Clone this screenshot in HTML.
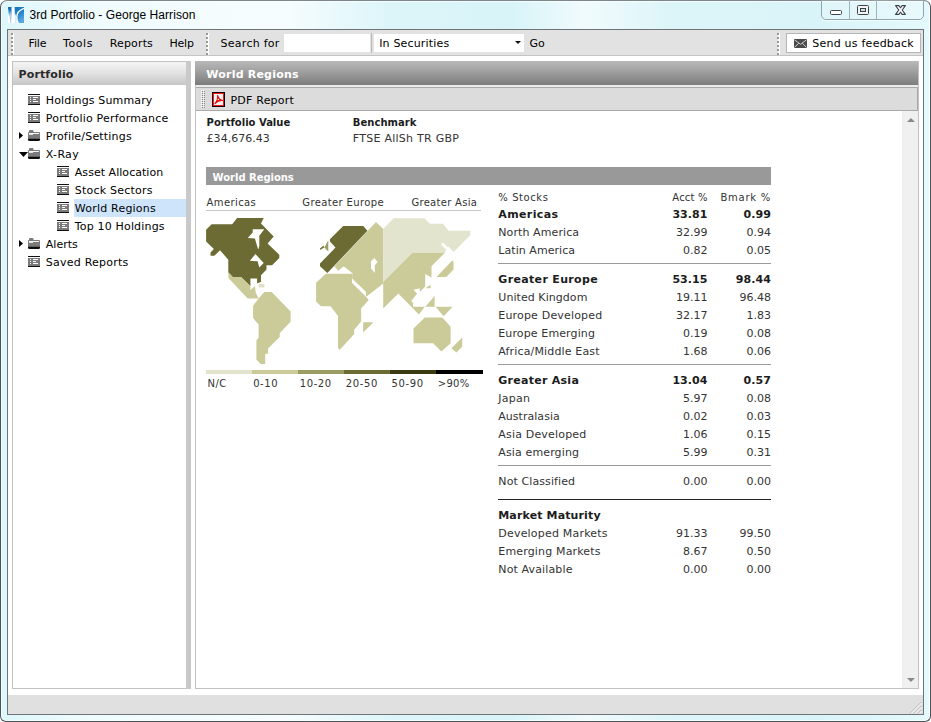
<!DOCTYPE html>
<html><head><meta charset="utf-8">
<style>
html,body{margin:0;padding:0;}
body{width:931px;height:722px;position:relative;overflow:hidden;background:#fff;font-family:"DejaVu Sans","Liberation Sans",sans-serif;font-size:11px;color:#000;}
.a{position:absolute;white-space:nowrap;}
.t{position:absolute;white-space:nowrap;line-height:14px;height:14px;font-size:11px;letter-spacing:-0.25px;}
.b{font-weight:bold;letter-spacing:-0.55px;}
#win{left:0;top:0;width:929px;height:720px;border:1px solid #4a545b;border-top-color:#7c878d;box-shadow:inset 0 0 0 1px rgba(255,255,255,.75);border-radius:7px 7px 6px 6px;background:linear-gradient(90deg,#dcf7fb 0%,#eefbfd 8%,#f7fdfe 30%,#dcf5f9 42%,#d8f4f8 55%,#f1fbfd 63%,#dcf5f9 72%,#d9f4f8 88%,#e4f9fc 100%);}
#client{left:7px;top:29px;width:915px;height:684px;border:1px solid #6e7378;background:#fff;}
#toolbar{left:8px;top:30px;width:915px;height:25px;background:#e2e2e2;border-bottom:1px solid #c4c4c4;}
.grip{width:3px;background:linear-gradient(#fff,#fff) 1px 0/2px 100% no-repeat;}
.grip i{position:absolute;left:0;width:2px;height:2px;background:#989898;}
#status{left:8px;top:695px;width:915px;height:19px;background:#e0e0e0;}
#lp{left:12px;top:61px;width:173px;height:626px;border:1px solid #c2c2c2;background:#fff;}
#lph{left:13px;top:62px;width:173px;height:23px;background:linear-gradient(180deg,#f4f4f4 0%,#e4e4e4 45%,#c6c6c6 100%);}
#split{left:186px;top:61px;width:5px;height:628px;background:#c9c9c9;}
#rp{left:195px;top:61px;width:722px;height:626px;border:1px solid #c2c2c2;background:#fff;}
#rph{left:195px;top:61px;width:723px;height:24px;background:linear-gradient(180deg,#b9b9b9 0%,#a2a2a2 40%,#7c7c7c 100%);}
#sub{left:196px;top:87px;width:721px;height:22px;background:#dcdcdc;border:1px solid #a9a9a9;border-left:none;}
#sb{left:902px;top:111px;width:16px;height:577px;background:#f0f0f0;}
.ln{position:absolute;left:498px;width:273px;height:1px;background:#8f8f8f;}
.n1{position:absolute;right:223px;white-space:nowrap;line-height:14px;font-size:11px;letter-spacing:-0.25px;}
.n2{position:absolute;right:160px;white-space:nowrap;line-height:14px;font-size:11px;letter-spacing:-0.25px;}
</style></head><body>
<div class="a" id="win"></div>
<div class="a" id="client"></div>
<div class="a" id="toolbar"></div>
<div class="a" id="status"></div>
<svg class="a" style="left:909px;top:701px" width="13" height="13" viewBox="0 0 13 13"><path d="M12.5 1L1 12.5M12.5 5L5 12.5M12.5 9L9 12.5" stroke="#a8a8a8" stroke-width="1"/><path d="M12.5 2L2 12.5M12.5 6L6 12.5M12.5 10L10 12.5" stroke="#fff" stroke-width="1"/></svg>
<!-- title -->
<svg class="a" style="left:8px;top:7px" width="16" height="16" viewBox="0 0 16 16"><defs><linearGradient id="lg" x1="0" y1="0" x2="0.6" y2="1"><stop offset="0" stop-color="#0f6fb4"/><stop offset="0.6" stop-color="#2582c8"/><stop offset="1" stop-color="#5aa7e0"/></linearGradient></defs><rect width="16" height="16" fill="url(#lg)"/><path d="M0 16V9L0.8 1.5 1.6 8 2.6 16Z" fill="#fff"/><path d="M3.6 0H6.6L7.2 16H3.1Z" fill="#fff"/><path d="M2 3L3.4 10V16H2.6Z" fill="#fff" opacity="0.9"/><path d="M16 1.3C11.5 3 8.6 6.5 8.8 10.5 8.9 13 9.6 15 10.5 16" fill="none" stroke="#fff" stroke-width="1.3"/><path d="M7.2 16L6.9 6 8.4 9.5C8.5 12 9 14.5 9.8 16Z" fill="#fff" opacity="0.85"/></svg>
<!-- window buttons -->
<div class="a" style="left:821px;top:-1px;width:101px;height:19px;border:1px solid #8fa6b0;border-radius:0 0 5px 5px;background:rgba(255,255,255,0.18);box-shadow:0 1px 0 rgba(255,255,255,.7)"></div>
<div class="a" style="left:849px;top:0px;width:1px;height:19px;background:#9fb3bc"></div>
<div class="a" style="left:876px;top:0px;width:1px;height:19px;background:#9fb3bc"></div>
<div class="a" style="left:830px;top:10px;width:10px;height:3px;border:1px solid #3c424c;border-radius:1.5px;background:#fff"></div>
<div class="a" style="left:857px;top:5px;width:10px;height:8px;border:1px solid #3c424c;border-radius:1.5px;background:#f4f4f6"></div>
<div class="a" style="left:860px;top:8px;width:4px;height:2px;border:1px solid #3c424c;background:#cfe0ea"></div>
<svg class="a" style="left:894px;top:4px" width="13" height="12" viewBox="0 0 13 12"><path d="M1.6 1.6H4.9L6.5 3.8 8.1 1.6H11.4L8.2 6 11.4 10.4H8.1L6.5 8.2 4.9 10.4H1.6L4.8 6Z" fill="#fafafa" stroke="#3c424c" stroke-width="1.1" stroke-linejoin="round"/></svg>
<!-- toolbar -->
<div class="a grip" style="left:11px;top:33px;height:22px"><i style="top:0px"></i><i style="top:4px"></i><i style="top:8px"></i><i style="top:12px"></i><i style="top:16px"></i><i style="top:20px"></i></div>
<div class="a grip" style="left:206px;top:33px;height:22px"><i style="top:0px"></i><i style="top:4px"></i><i style="top:8px"></i><i style="top:12px"></i><i style="top:16px"></i><i style="top:20px"></i></div>
<div class="a grip" style="left:777px;top:33px;height:22px"><i style="top:0px"></i><i style="top:4px"></i><i style="top:8px"></i><i style="top:12px"></i><i style="top:16px"></i><i style="top:20px"></i></div>
<div class="a" style="left:284px;top:34px;width:86px;height:18px;background:#fff"></div>
<div class="a" style="left:371px;top:33px;width:1px;height:20px;background:#b9b9b9"></div>
<div class="a" style="left:374px;top:34px;width:150px;height:18px;background:#fff"></div>
<div class="a" style="left:515px;top:41px;width:0;height:0;border-left:3px solid transparent;border-right:3px solid transparent;border-top:3px solid #111"></div>
<div class="a" style="left:786px;top:33px;width:133px;height:18px;background:#fff;border:1px solid #b5b5b5"></div>
<svg class="a" style="left:794px;top:39px" width="13" height="9" viewBox="0 0 13 9"><rect width="13" height="9" fill="#4a4a4a"/><path d="M0.5 0.8L6.5 5.3 12.5 0.8M0.5 8.5L4.7 4.2M12.5 8.5L8.3 4.2" stroke="#dcdcdc" stroke-width="0.9" fill="none"/></svg>
<!-- left panel -->
<div class="a" id="lp"></div>
<div class="a" id="lph"></div>
<div class="a" id="split"></div>
<div class="a" style="left:74px;top:199px;width:112px;height:18px;background:#cde4fb"></div>
<svg class="a" style="left:28px;top:94px" width="12" height="11" viewBox="0 0 12 11"><rect x="0" y="0" width="12" height="1" fill="#111"/><rect x="0" y="2" width="12" height="8" fill="#7b7b7b"/><rect x="0" y="10" width="12" height="1" fill="#111"/><rect x="2" y="3" width="1" height="1" fill="#fff"/><rect x="5" y="3" width="5" height="1" fill="#fff"/><rect x="2" y="5" width="1" height="1" fill="#fff"/><rect x="5" y="5" width="3" height="1" fill="#fff"/><rect x="2" y="7" width="1" height="1" fill="#fff"/><rect x="5" y="7" width="5" height="1" fill="#fff"/></svg>
<svg class="a" style="left:28px;top:112px" width="12" height="11" viewBox="0 0 12 11"><rect x="0" y="0" width="12" height="1" fill="#111"/><rect x="0" y="2" width="12" height="8" fill="#7b7b7b"/><rect x="0" y="10" width="12" height="1" fill="#111"/><rect x="2" y="3" width="1" height="1" fill="#fff"/><rect x="5" y="3" width="5" height="1" fill="#fff"/><rect x="2" y="5" width="1" height="1" fill="#fff"/><rect x="5" y="5" width="3" height="1" fill="#fff"/><rect x="2" y="7" width="1" height="1" fill="#fff"/><rect x="5" y="7" width="5" height="1" fill="#fff"/></svg>
<svg class="a" style="left:28px;top:256px" width="12" height="11" viewBox="0 0 12 11"><rect x="0" y="0" width="12" height="1" fill="#111"/><rect x="0" y="2" width="12" height="8" fill="#7b7b7b"/><rect x="0" y="10" width="12" height="1" fill="#111"/><rect x="2" y="3" width="1" height="1" fill="#fff"/><rect x="5" y="3" width="5" height="1" fill="#fff"/><rect x="2" y="5" width="1" height="1" fill="#fff"/><rect x="5" y="5" width="3" height="1" fill="#fff"/><rect x="2" y="7" width="1" height="1" fill="#fff"/><rect x="5" y="7" width="5" height="1" fill="#fff"/></svg>
<svg class="a" style="left:57px;top:166px" width="12" height="11" viewBox="0 0 12 11"><rect x="0" y="0" width="12" height="1" fill="#111"/><rect x="0" y="2" width="12" height="8" fill="#7b7b7b"/><rect x="0" y="10" width="12" height="1" fill="#111"/><rect x="2" y="3" width="1" height="1" fill="#fff"/><rect x="5" y="3" width="5" height="1" fill="#fff"/><rect x="2" y="5" width="1" height="1" fill="#fff"/><rect x="5" y="5" width="3" height="1" fill="#fff"/><rect x="2" y="7" width="1" height="1" fill="#fff"/><rect x="5" y="7" width="5" height="1" fill="#fff"/></svg>
<svg class="a" style="left:57px;top:184px" width="12" height="11" viewBox="0 0 12 11"><rect x="0" y="0" width="12" height="1" fill="#111"/><rect x="0" y="2" width="12" height="8" fill="#7b7b7b"/><rect x="0" y="10" width="12" height="1" fill="#111"/><rect x="2" y="3" width="1" height="1" fill="#fff"/><rect x="5" y="3" width="5" height="1" fill="#fff"/><rect x="2" y="5" width="1" height="1" fill="#fff"/><rect x="5" y="5" width="3" height="1" fill="#fff"/><rect x="2" y="7" width="1" height="1" fill="#fff"/><rect x="5" y="7" width="5" height="1" fill="#fff"/></svg>
<svg class="a" style="left:57px;top:202px" width="12" height="11" viewBox="0 0 12 11"><rect x="0" y="0" width="12" height="1" fill="#111"/><rect x="0" y="2" width="12" height="8" fill="#7b7b7b"/><rect x="0" y="10" width="12" height="1" fill="#111"/><rect x="2" y="3" width="1" height="1" fill="#fff"/><rect x="5" y="3" width="5" height="1" fill="#fff"/><rect x="2" y="5" width="1" height="1" fill="#fff"/><rect x="5" y="5" width="3" height="1" fill="#fff"/><rect x="2" y="7" width="1" height="1" fill="#fff"/><rect x="5" y="7" width="5" height="1" fill="#fff"/></svg>
<svg class="a" style="left:57px;top:220px" width="12" height="11" viewBox="0 0 12 11"><rect x="0" y="0" width="12" height="1" fill="#111"/><rect x="0" y="2" width="12" height="8" fill="#7b7b7b"/><rect x="0" y="10" width="12" height="1" fill="#111"/><rect x="2" y="3" width="1" height="1" fill="#fff"/><rect x="5" y="3" width="5" height="1" fill="#fff"/><rect x="2" y="5" width="1" height="1" fill="#fff"/><rect x="5" y="5" width="3" height="1" fill="#fff"/><rect x="2" y="7" width="1" height="1" fill="#fff"/><rect x="5" y="7" width="5" height="1" fill="#fff"/></svg>
<svg class="a" style="left:28px;top:130px" width="12" height="11" viewBox="0 0 12 11"><path d="M0 3Q0 2 1 2V1Q1 0 2 0H4.5Q5.5 0 5.5 1V2H11Q12 2 12 3V9H0Z" fill="#7b7b7b"/><rect x="1" y="3" width="10" height="1" fill="#f4f4f4"/><rect x="1" y="4" width="4" height="1" fill="#e0e0e0"/><path d="M0 8.7H12V9.5Q12 11 10.5 11H1.5Q0 11 0 9.5Z" fill="#0c0c0c"/></svg>
<svg class="a" style="left:28px;top:148px" width="12" height="11" viewBox="0 0 12 11"><path d="M0 3Q0 2 1 2V1Q1 0 2 0H4.5Q5.5 0 5.5 1V2H11Q12 2 12 3V9H0Z" fill="#7b7b7b"/><rect x="1" y="3" width="10" height="1" fill="#f4f4f4"/><rect x="1" y="4" width="4" height="1" fill="#e0e0e0"/><path d="M0 8.7H12V9.5Q12 11 10.5 11H1.5Q0 11 0 9.5Z" fill="#0c0c0c"/></svg>
<svg class="a" style="left:28px;top:238px" width="12" height="11" viewBox="0 0 12 11"><path d="M0 3Q0 2 1 2V1Q1 0 2 0H4.5Q5.5 0 5.5 1V2H11Q12 2 12 3V9H0Z" fill="#7b7b7b"/><rect x="1" y="3" width="10" height="1" fill="#f4f4f4"/><rect x="1" y="4" width="4" height="1" fill="#e0e0e0"/><path d="M0 8.7H12V9.5Q12 11 10.5 11H1.5Q0 11 0 9.5Z" fill="#0c0c0c"/></svg>
<svg class="a" style="left:19px;top:132px" width="4" height="7" viewBox="0 0 4 7"><path d="M0 0L4 3.5 0 7Z" fill="#000"/></svg>
<svg class="a" style="left:19px;top:240px" width="4" height="7" viewBox="0 0 4 7"><path d="M0 0L4 3.5 0 7Z" fill="#000"/></svg>
<svg class="a" style="left:19px;top:152px" width="9" height="5" viewBox="0 0 9 5"><path d="M0 0H9L4.5 5Z" fill="#000"/></svg>
<!-- right panel -->
<div class="a" id="rp"></div>
<div class="a" id="rph"></div>
<div class="a" style="left:196px;top:85px;width:722px;height:2px;background:#ececec"></div>
<div class="a" id="sub"></div>
<svg class="a" style="left:201px;top:90px" width="4" height="18" viewBox="0 0 4 18"><defs><pattern id="gp" width="2" height="2" patternUnits="userSpaceOnUse"><rect width="1" height="1" fill="#fff"/><rect x="1" y="1" width="1" height="1" fill="#8a8a8a"/></pattern></defs><rect width="4" height="18" fill="url(#gp)"/></svg>
<div class="a" id="sb"></div>
<div class="a" style="left:907px;top:118px;width:0;height:0;border-left:4px solid transparent;border-right:4px solid transparent;border-bottom:4px solid #8a8a8a"></div>
<div class="a" style="left:907px;top:678px;width:0;height:0;border-left:4px solid transparent;border-right:4px solid transparent;border-top:4px solid #8a8a8a"></div>
<svg class="a" style="left:212px;top:92px" width="13" height="15" viewBox="0 0 13 15"><rect width="13" height="15" fill="#120000"/><rect x="1" y="1" width="11" height="13" fill="#ee1c1c"/><rect x="2" y="2" width="9" height="11" fill="#f1f3f1"/><path d="M3 11.5C5 9.5 6 6.5 5.5 3.5C6.5 6.5 7.5 8 10.5 8.5C8 8.3 5.5 9 3 11.5Z" fill="#f02a1a" stroke="#e81010" stroke-width="1.2" stroke-linejoin="round"/><circle cx="6.3" cy="7.4" r="0.7" fill="#fff"/></svg>
<div class="a" style="left:206px;top:167px;width:565px;height:18px;background:#999"></div>
<svg class="a" style="left:0;top:0" width="931" height="722" viewBox="0 0 931 722"><polygon points="237.1,218.1 263.7,218.1 261.0,223.6 273.7,236.4 267.6,243.6 279.3,254.7 279.3,258.0 272.1,265.2 266.5,265.2 266.5,269.6 261.0,275.2 261.0,281.8 257.1,283.5 257.1,278.5 250.4,278.5 250.4,286.3 241.0,276.9 232.7,276.9 228.3,272.4 228.3,259.7 220.0,250.2 214.4,255.8 210.5,255.8 210.5,252.5 213.9,249.1 206.1,241.4 206.1,229.7 211.6,224.2 232.2,224.2" fill="#6b6b33"/>
<polygon points="252.7,229.2 264.3,229.2 259.3,235.8 259.3,246.0 258.2,249.7 254.9,238.6 247.7,238.1 252.7,232.5" fill="#fff"/>
<polygon points="255.4,254.1 263.7,263.0 259.3,267.4 257.6,261.3 249.9,260.8" fill="#fff"/>
<polygon points="228.4,272.3 232.7,276.9 241.0,276.9 250.4,286.3 250.4,290.0 255.0,286.0 255.7,292.6 258.6,298.4 264.4,291.9 271.7,291.9 290.6,311.5 290.6,321.7 279.7,333.3 279.7,337.0 268.1,348.6 268.1,353.7 265.2,353.7 265.2,363.9 260.8,363.9 256.4,359.5 256.4,340.6 258.6,337.7 258.6,324.6 253.1,318.1 253.1,305.7 258.6,298.4 247.7,298.4 228.4,278.1" fill="#cacb99"/>
<rect x="258.6" y="283.9" width="5.8" height="3.6" fill="#dfe0c6"/>
<polygon points="376.0,222.0 383.2,229.0 383.2,283.5 366.6,296.6 352.1,278.6 352.7,273.5 343.8,266.3 338.3,270.8 334.4,266.3" fill="#cacb99"/>
<polygon points="374.3,258.0 377.6,261.9 374.8,265.2 374.8,273.0 371.0,268.5 371.0,261.3" fill="#fff"/>
<polygon points="343.2,225.9 363.3,225.9 367.4,230.8 327.4,273.0 320.0,266.3 320.0,263.6 335.5,247.5 329.9,241.4 329.9,239.2" fill="#6b6b33"/>
<polygon points="328.3,240.3 328.3,251.4 324.4,247.5" fill="#9b9c62"/>
<polygon points="324.4,247.5 320.0,249.9 320.0,248.5 323.5,245.5" fill="#77773c"/>
<polygon points="325.8,273.8 352.8,273.8 352.1,282.8 365.9,296.5 368.7,300.1 361.1,308.4 361.1,321.5 354.2,329.8 354.2,334.0 339.6,349.9 338.0,347.8 338.0,316.0 330.6,306.3 320.9,306.3 316.1,301.5 316.1,282.8" fill="#cacb99"/>
<polygon points="352.1,278.6 365.9,291.8 365.9,296.5 352.1,282.8" fill="#fff"/>
<polygon points="363.2,322.2 373.5,322.2 363.2,332.6" fill="#cacb99"/>
<polygon points="383.2,228.8 393.7,218.2 424.3,218.2 429.9,223.8 443.0,223.8 448.6,230.7 470.4,230.7 470.4,235.1 453.6,251.9 448.2,246.5 444.8,252.8 412.4,252.8 383.2,281.9" fill="#e3e4cd"/>
<polygon points="441.0,244.4 443.0,242.6 451.5,251.0 449.5,253.0" fill="#fff"/>
<polygon points="383.2,281.9 412.4,252.8 444.8,252.8 431.5,266.3 431.5,277.5 425.2,273.9 425.2,286.5 419.8,291.9 419.8,288.3 413.5,289.7 417.0,293.7 411.2,300.9 413.0,302.7 413.0,306.8 424.7,306.8 418.9,314.4 398.3,293.5 383.2,308.4" fill="#cacb99"/>
<polygon points="430.6,284.7 430.6,288.3 425.6,288.3" fill="#cacb99"/>
<polygon points="452.2,260.4 453.5,261.8 453.5,269.4 446.3,277.1 436.4,277.1" fill="#cacb99"/>
<polygon points="434.6,296.0 434.6,306.8 425.2,306.8" fill="#cacb99"/>
<polygon points="435.5,306.8 452.6,306.8 443.6,316.2" fill="#cacb99"/>
<polygon points="424.8,317.6 442.3,317.6 450.6,326.7 450.6,343.3 441.4,351.6 433.1,343.3 413.5,343.3 413.5,328.4" fill="#cacb99"/>
<polygon points="462.2,337.5 462.2,346.7 456.4,352.5 451.4,348.3" fill="#cacb99"/></svg>
<div class="a" style="left:206px;top:210px;width:275px;height:1px;background:#c8c8c8"></div>
<div class="a" style="left:206px;top:370px;width:46px;height:4px;background:#e3e4cd"></div>
<div class="a" style="left:252px;top:370px;width:46px;height:4px;background:#cacb99"></div>
<div class="a" style="left:298px;top:370px;width:46px;height:4px;background:#9b9c62"></div>
<div class="a" style="left:344px;top:370px;width:46px;height:4px;background:#6b6b33"></div>
<div class="a" style="left:390px;top:370px;width:46px;height:4px;background:#3b3b12"></div>
<div class="a" style="left:436px;top:370px;width:47px;height:4px;background:#000"></div>
<div class="a" style="left:498px;top:263px;width:273px;height:1px;background:#9a9a9a"></div>
<div class="a" style="left:498px;top:364px;width:273px;height:1px;background:#9a9a9a"></div>
<div class="a" style="left:498px;top:465px;width:273px;height:1px;background:#9a9a9a"></div>
<div class="a" style="left:498px;top:499px;width:273px;height:1px;background:#222"></div>
<div class="t" style="left:28.5px;top:36.5px;font-size:11px;letter-spacing:-0.11px;">File</div>
<div class="t" style="left:63.0px;top:36.5px;font-size:11px;letter-spacing:0.60px;">Tools</div>
<div class="t" style="left:109.7px;top:36.5px;font-size:11px;letter-spacing:0.16px;">Reports</div>
<div class="t" style="left:169.5px;top:36.5px;font-size:11px;letter-spacing:-0.24px;">Help</div>
<div class="t" style="left:220.6px;top:36.5px;font-size:11px;letter-spacing:0.26px;">Search for</div>
<div class="t" style="left:379.2px;top:36.5px;font-size:11px;letter-spacing:0.17px;">In Securities</div>
<div class="t" style="left:529.6px;top:36.5px;font-size:11px;letter-spacing:-0.08px;">Go</div>
<div class="t" style="left:812.2px;top:36.5px;font-size:11px;letter-spacing:0.24px;">Send us feedback</div>
<div class="t" style="left:18.5px;top:68.0px;font-size:11px;letter-spacing:0.14px;font-weight:bold;color:#2a2a2a;">Portfolio</div>
<div class="t" style="left:206.3px;top:68.0px;font-size:11px;letter-spacing:0.21px;font-weight:bold;color:#fff;">World Regions</div>
<div class="t" style="left:230.5px;top:93.5px;font-size:11px;letter-spacing:0.21px;">PDF Report</div>
<div class="t" style="left:45.8px;top:94.0px;font-size:11px;letter-spacing:0.14px;">Holdings Summary</div>
<div class="t" style="left:45.8px;top:112.0px;font-size:11px;letter-spacing:0.20px;">Portfolio Performance</div>
<div class="t" style="left:45.8px;top:130.0px;font-size:11px;letter-spacing:0.19px;">Profile/Settings</div>
<div class="t" style="left:45.8px;top:148.0px;font-size:11px;letter-spacing:0.32px;">X-Ray</div>
<div class="t" style="left:74.8px;top:166.0px;font-size:11px;letter-spacing:0.04px;">Asset Allocation</div>
<div class="t" style="left:74.8px;top:184.0px;font-size:11px;letter-spacing:0.22px;">Stock Sectors</div>
<div class="t" style="left:74.8px;top:202.0px;font-size:11px;letter-spacing:0.21px;">World Regions</div>
<div class="t" style="left:74.8px;top:220.0px;font-size:11px;letter-spacing:0.17px;">Top 10 Holdings</div>
<div class="t" style="left:45.8px;top:238.0px;font-size:11px;letter-spacing:-0.00px;">Alerts</div>
<div class="t" style="left:45.8px;top:256.0px;font-size:11px;letter-spacing:0.23px;">Saved Reports</div>
<div class="t" style="left:206.6px;top:116.0px;font-size:10px;letter-spacing:-0.00px;font-weight:bold;color:#1c1c1c;">Portfolio Value</div>
<div class="t" style="left:352.8px;top:116.0px;font-size:10px;letter-spacing:0.04px;font-weight:bold;color:#1c1c1c;">Benchmark</div>
<div class="t" style="left:206.6px;top:132.0px;font-size:11px;letter-spacing:0.02px;color:#333;">£34,676.43</div>
<div class="t" style="left:352.8px;top:132.0px;font-size:11px;letter-spacing:0.26px;color:#333;">FTSE AllSh TR GBP</div>
<div class="t" style="left:212.6px;top:170.5px;font-size:10px;letter-spacing:-0.03px;font-weight:bold;color:#fff;">World Regions</div>
<div class="t" style="left:206.6px;top:195.5px;font-size:10px;letter-spacing:0.39px;color:#333;">Americas</div>
<div class="t" style="left:302.3px;top:195.5px;font-size:10px;letter-spacing:0.37px;color:#333;">Greater Europe</div>
<div class="t" style="left:411.4px;top:195.5px;font-size:10px;letter-spacing:0.30px;color:#333;">Greater Asia</div>
<div class="t" style="left:207.6px;top:376.5px;font-size:10px;letter-spacing:0.39px;color:#333;">N/C</div>
<div class="t" style="left:253.2px;top:376.5px;font-size:10px;letter-spacing:0.55px;color:#333;">0-10</div>
<div class="t" style="left:299.8px;top:376.5px;font-size:10px;letter-spacing:0.57px;color:#333;">10-20</div>
<div class="t" style="left:345.7px;top:376.5px;font-size:10px;letter-spacing:0.63px;color:#333;">20-50</div>
<div class="t" style="left:391.5px;top:376.5px;font-size:10px;letter-spacing:0.65px;color:#333;">50-90</div>
<div class="t" style="left:437.8px;top:376.5px;font-size:10px;letter-spacing:0.25px;color:#333;">&gt;90%</div>
<div class="t" style="left:498.3px;top:190.5px;font-size:10px;letter-spacing:0.58px;color:#333;">% Stocks</div>
<div class="t" style="left:672.3px;top:190.5px;font-size:10px;letter-spacing:0.17px;color:#333;">Acct %</div>
<div class="t" style="left:720.5px;top:190.5px;font-size:10px;letter-spacing:0.74px;color:#333;">Bmark %</div>
<div class="t" style="left:498.3px;top:208.0px;font-size:11px;letter-spacing:0.38px;font-weight:bold;color:#1c1c1c;">Americas</div>
<div class="t" style="left:672.4px;top:208.0px;font-size:11px;letter-spacing:0.08px;font-weight:bold;color:#1c1c1c;">33.81</div>
<div class="t" style="left:743.6px;top:208.0px;font-size:11px;letter-spacing:0.06px;font-weight:bold;color:#1c1c1c;">0.99</div>
<div class="t" style="left:498.3px;top:226.0px;font-size:11px;letter-spacing:0.09px;color:#333;">North America</div>
<div class="t" style="left:676.0px;top:226.0px;font-size:11px;letter-spacing:0.02px;color:#333;">32.99</div>
<div class="t" style="left:746.4px;top:226.0px;font-size:11px;letter-spacing:0.03px;color:#333;">0.94</div>
<div class="t" style="left:498.3px;top:244.0px;font-size:11px;letter-spacing:0.05px;color:#333;">Latin America</div>
<div class="t" style="left:683.0px;top:244.0px;font-size:11px;letter-spacing:0.03px;color:#333;">0.82</div>
<div class="t" style="left:746.4px;top:244.0px;font-size:11px;letter-spacing:0.03px;color:#333;">0.05</div>
<div class="t" style="left:498.3px;top:273.0px;font-size:11px;letter-spacing:0.34px;font-weight:bold;color:#1c1c1c;">Greater Europe</div>
<div class="t" style="left:672.4px;top:273.0px;font-size:11px;letter-spacing:0.08px;font-weight:bold;color:#1c1c1c;">53.15</div>
<div class="t" style="left:735.8px;top:273.0px;font-size:11px;letter-spacing:0.08px;font-weight:bold;color:#1c1c1c;">98.44</div>
<div class="t" style="left:498.3px;top:291.0px;font-size:11px;letter-spacing:0.06px;color:#333;">United Kingdom</div>
<div class="t" style="left:676.0px;top:291.0px;font-size:11px;letter-spacing:0.02px;color:#333;">19.11</div>
<div class="t" style="left:739.4px;top:291.0px;font-size:11px;letter-spacing:0.02px;color:#333;">96.48</div>
<div class="t" style="left:498.3px;top:309.0px;font-size:11px;letter-spacing:0.18px;color:#333;">Europe Developed</div>
<div class="t" style="left:676.0px;top:309.0px;font-size:11px;letter-spacing:0.02px;color:#333;">32.17</div>
<div class="t" style="left:746.4px;top:309.0px;font-size:11px;letter-spacing:0.03px;color:#333;">1.83</div>
<div class="t" style="left:498.3px;top:327.0px;font-size:11px;letter-spacing:0.12px;color:#333;">Europe Emerging</div>
<div class="t" style="left:683.0px;top:327.0px;font-size:11px;letter-spacing:0.03px;color:#333;">0.19</div>
<div class="t" style="left:746.4px;top:327.0px;font-size:11px;letter-spacing:0.03px;color:#333;">0.08</div>
<div class="t" style="left:498.3px;top:345.0px;font-size:11px;letter-spacing:0.15px;color:#333;">Africa/Middle East</div>
<div class="t" style="left:683.0px;top:345.0px;font-size:11px;letter-spacing:0.03px;color:#333;">1.68</div>
<div class="t" style="left:746.4px;top:345.0px;font-size:11px;letter-spacing:0.03px;color:#333;">0.06</div>
<div class="t" style="left:498.3px;top:374.0px;font-size:11px;letter-spacing:0.27px;font-weight:bold;color:#1c1c1c;">Greater Asia</div>
<div class="t" style="left:672.4px;top:374.0px;font-size:11px;letter-spacing:0.08px;font-weight:bold;color:#1c1c1c;">13.04</div>
<div class="t" style="left:743.6px;top:374.0px;font-size:11px;letter-spacing:0.06px;font-weight:bold;color:#1c1c1c;">0.57</div>
<div class="t" style="left:498.3px;top:392.0px;font-size:11px;letter-spacing:0.24px;color:#333;">Japan</div>
<div class="t" style="left:683.0px;top:392.0px;font-size:11px;letter-spacing:0.03px;color:#333;">5.97</div>
<div class="t" style="left:746.4px;top:392.0px;font-size:11px;letter-spacing:0.03px;color:#333;">0.08</div>
<div class="t" style="left:498.3px;top:410.0px;font-size:11px;letter-spacing:0.03px;color:#333;">Australasia</div>
<div class="t" style="left:683.0px;top:410.0px;font-size:11px;letter-spacing:0.03px;color:#333;">0.02</div>
<div class="t" style="left:746.4px;top:410.0px;font-size:11px;letter-spacing:0.03px;color:#333;">0.03</div>
<div class="t" style="left:498.3px;top:428.0px;font-size:11px;letter-spacing:0.18px;color:#333;">Asia Developed</div>
<div class="t" style="left:683.0px;top:428.0px;font-size:11px;letter-spacing:0.03px;color:#333;">1.06</div>
<div class="t" style="left:746.4px;top:428.0px;font-size:11px;letter-spacing:0.03px;color:#333;">0.15</div>
<div class="t" style="left:498.3px;top:446.0px;font-size:11px;letter-spacing:0.13px;color:#333;">Asia emerging</div>
<div class="t" style="left:683.0px;top:446.0px;font-size:11px;letter-spacing:0.03px;color:#333;">5.99</div>
<div class="t" style="left:746.4px;top:446.0px;font-size:11px;letter-spacing:0.03px;color:#333;">0.31</div>
<div class="t" style="left:498.3px;top:475.0px;font-size:11px;letter-spacing:0.10px;color:#333;">Not Classified</div>
<div class="t" style="left:683.0px;top:475.0px;font-size:11px;letter-spacing:0.03px;color:#333;">0.00</div>
<div class="t" style="left:746.4px;top:475.0px;font-size:11px;letter-spacing:0.03px;color:#333;">0.00</div>
<div class="t" style="left:498.3px;top:509.0px;font-size:11px;letter-spacing:0.13px;font-weight:bold;color:#1c1c1c;">Market Maturity</div>
<div class="t" style="left:498.3px;top:527.0px;font-size:11px;letter-spacing:0.20px;color:#333;">Developed Markets</div>
<div class="t" style="left:676.0px;top:527.0px;font-size:11px;letter-spacing:0.02px;color:#333;">91.33</div>
<div class="t" style="left:739.4px;top:527.0px;font-size:11px;letter-spacing:0.02px;color:#333;">99.50</div>
<div class="t" style="left:498.3px;top:545.0px;font-size:11px;letter-spacing:0.16px;color:#333;">Emerging Markets</div>
<div class="t" style="left:683.0px;top:545.0px;font-size:11px;letter-spacing:0.03px;color:#333;">8.67</div>
<div class="t" style="left:746.4px;top:545.0px;font-size:11px;letter-spacing:0.03px;color:#333;">0.50</div>
<div class="t" style="left:498.3px;top:563.0px;font-size:11px;letter-spacing:0.13px;color:#333;">Not Available</div>
<div class="t" style="left:683.0px;top:563.0px;font-size:11px;letter-spacing:0.03px;color:#333;">0.00</div>
<div class="t" style="left:746.4px;top:563.0px;font-size:11px;letter-spacing:0.03px;color:#333;">0.00</div>
<div class="t" style="left:29.5px;top:7.5px;font-size:12px;letter-spacing:0.06px;font-family:'Liberation Sans',sans-serif;">3rd Portfolio - George Harrison</div>
</body></html>
